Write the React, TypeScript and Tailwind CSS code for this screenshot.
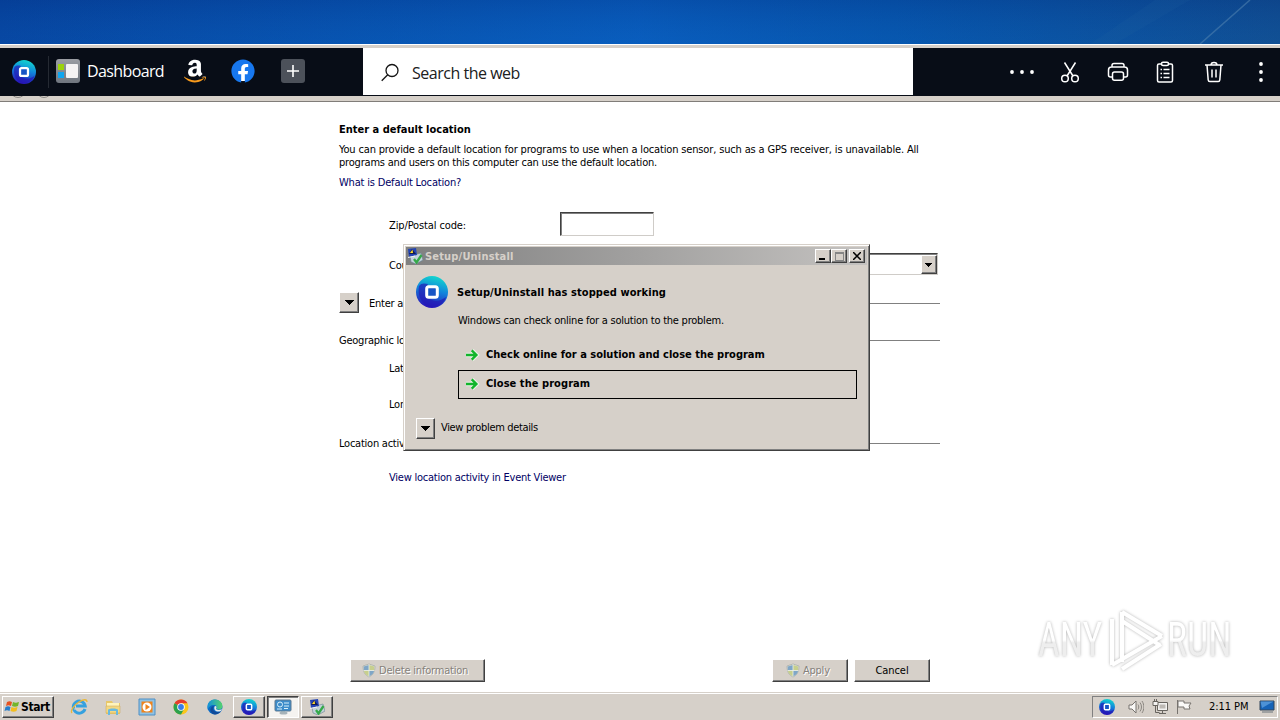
import type { ReactNode } from "react";
import { FaAmazon, FaFacebook } from "react-icons/fa";

const raised =
  "bg-[#d6d0c9] border border-t-white border-l-white border-r-[#404040] border-b-[#404040] shadow-[inset_-1px_-1px_0_#808080]";

function Logo({ className, id }: { className: string; id: string }) {
  return (
    <svg viewBox="0 0 32 32" className={className}>
      <defs>
        <linearGradient id={id} x1="0.65" y1="0" x2="0.4" y2="1">
          <stop offset="0" stopColor="#12d8cd" />
          <stop offset="0.45" stopColor="#1184dc" />
          <stop offset="1" stopColor="#2a10b8" />
        </linearGradient>
      </defs>
      <circle cx="16" cy="16" r="16" fill={`url(#${id})`} />
      <path d="M3 10c-2 10 3 20 13 21 8 0 13-5 14-10-4 3-9 5-14 3C9 22 9 14 12 8 8 7 5 7 3 10z" fill="#2414b4" opacity=".65" />
      <rect x="10.7" y="10.7" width="10.6" height="10.6" rx="2" fill="#1755c5" stroke="#fff" strokeWidth="3" />
    </svg>
  );
}

function Arrow() {
  return (
    <svg viewBox="0 0 14 14" className="mt-px h-[14px] w-[14px] shrink-0">
      <path d="M0 7h10M6 2.500 10.500 7 6 11.500" fill="none" stroke="#e9f2e6" strokeWidth="4.500" />
      <path d="M0 7h10M5.700 2.300 10.400 7l-4.700 4.700" fill="none" stroke="#12b52c" strokeWidth="2.400" />
    </svg>
  );
}

function Drop({ className, small }: { className: string; small?: boolean }) {
  return (
    <span className={`flex shrink-0 items-center justify-center ${raised} ${className}`}>
      {small ? (
        <svg viewBox="0 0 7 4" className="mr-px h-1 w-[7px]" shapeRendering="crispEdges">
          <path d="M0 0h7v1H0zM1 1h5v1H1zM2 2h3v1H2zM3 3h1v1H3z" fill="#000" />
        </svg>
      ) : (
        <svg viewBox="0 0 9 5" className="h-[5px] w-[9px]" shapeRendering="crispEdges">
          <path d="M0 0h9v1H0zM1 1h7v1H1zM2 2h5v1H2zM3 3h3v1H3zM4 4h1v1H4z" fill="#000" />
        </svg>
      )}
    </span>
  );
}

function Shield({ className }: { className: string }) {
  return (
    <svg viewBox="0 0 14 14" className={className}>
      <path d="M7 .5 13 2.500c0 6-2 9-6 11-4-2-6-5-6-11z" fill="#dfe3dc" stroke="#a3a9a5" strokeWidth=".7" />
      <path d="M7 1.500V7H1.800L1.700 3zM7 7h5.200c-.5 2.500-2 4.500-5.200 6z" fill="#7fa6c6" />
      <path d="M7 1.500 12.300 3l-.1 4H7zM7 7v6c-3.200-1.500-4.700-3.500-5.200-6z" fill="#c7cf8d" />
      <path d="M1.500 7h11M7 1v12" stroke="#eef1ea" strokeWidth=".8" />
    </svg>
  );
}

function Installer({ className }: { className: string }) {
  return (
    <svg viewBox="0 0 16 16" className={className}>
      <path d="M3 8 14 5l2 7-7 4-5-2z" fill="#c3d2da" stroke="#66828e" strokeWidth=".6" />
      <path d="m1 1 8-1 1 7-8 2z" fill="#2344b4" />
      <path d="M2 6 5 1l4 5z" fill="#141c50" />
      <path d="m3 5 2.500-3.500L6 5z" fill="#ffdc30" />
      <path d="M1 9.500 8 8" stroke="#f0f3f6" />
      <path d="m7 11 2.500 3.500L14.500 7" stroke="#35a94a" strokeWidth="2.300" fill="none" />
    </svg>
  );
}

function Amazon() {
  return (
    <span className="relative h-[25px] w-[22px]">
      <FaAmazon className="absolute -left-px -top-px h-[26px] w-6 text-white [clip-path:inset(0_0_28%_0)]" />
      <FaAmazon className="absolute -left-px -top-px h-[26px] w-6 text-[#f79a1c] [clip-path:inset(72%_0_0_0)]" />
    </span>
  );
}

function Toolbar() {
  return (
    <div className="flex h-12 shrink-0 bg-[#080d17] font-['Open_Sans',sans-serif] [font-stretch:normal]">
      <div className="flex w-[363px] items-center pl-3">
        <Logo id="bar" className="h-6 w-6" />
        <span className="ml-3 h-8 w-px bg-[#252a33]" />
        <svg viewBox="0 0 24 24" className="mb-0.5 ml-[7px] h-6 w-6">
          <defs>
            <linearGradient id="dash" x1="0" y1="0" x2="0" y2="1">
              <stop offset="0" stopColor="#9a9da3" />
              <stop offset="1" stopColor="#70767f" />
            </linearGradient>
          </defs>
          <rect width="24" height="24" rx="3" fill="url(#dash)" />
          <rect x="2" y="5" width="6" height="6" fill="#9bd20a" />
          <rect x="2" y="13" width="6" height="6" fill="#0ea5ef" />
          <rect x="10" y="5" width="12" height="14" rx="1" fill="#f5f3f3" />
        </svg>
        <span className="mb-0.5 ml-[7px] w-[77px] whitespace-nowrap text-[16px] tracking-[-0.62px] text-white">Dashboard</span>
        <span className="ml-5 mb-px flex"><Amazon /></span>
        <span className="mb-0.5 ml-[25px] flex h-6 w-6 rounded-full bg-[radial-gradient(circle,white_60%,transparent_62%)]">
          <FaFacebook className="h-6 w-6 text-[#1777ee]" />
        </span>
        <span className="mb-0.5 ml-[26px] flex h-6 w-6 items-center justify-center rounded-[3px] bg-[#4c515a]">
          <svg viewBox="0 0 12 12" className="h-3 w-3"><path d="M6 0v12M0 6h12" stroke="#fff" strokeWidth="1.600" /></svg>
        </span>
      </div>
      <div className="flex h-[47px] w-[550px] items-center bg-white pl-[18px]">
        <svg viewBox="0 0 20 20" className="mt-px h-5 w-5" fill="none" stroke="#151515" strokeWidth="1.300">
          <circle cx="11" cy="8.500" r="6" />
          <path d="m6.700 12.700-6 6" />
        </svg>
        <span className="ml-[11px] mt-[3px] text-[16px] tracking-[-0.48px] text-[#202020]">Search the web</span>
      </div>
      <div className="flex flex-1 items-center pb-px pl-[96px] text-white">
        <svg viewBox="0 0 26 6" className="h-1.5 w-[26px]" fill="currentColor">
          <circle cx="3" cy="3" r="1.900" /><circle cx="13" cy="3" r="1.900" /><circle cx="23" cy="3" r="1.900" />
        </svg>
        <svg viewBox="0 0 20 22" className="ml-[25px] h-[22px] w-5" fill="none" stroke="currentColor" strokeWidth="1.500">
          <path d="M4.500 1.500 13 15M15.500 1.500 7 15" />
          <circle cx="5" cy="17.500" r="3.300" /><circle cx="15" cy="17.500" r="3.300" />
        </svg>
        <svg viewBox="0 0 22 20" className="ml-[27px] h-5 w-[22px]" fill="none" stroke="currentColor" strokeWidth="1.500">
          <path d="M5 5V3.500C5 2.200 5.700 1.500 7 1.500h8c1.300 0 2 .7 2 2V5M5 15H3.500c-1.300 0-2-.7-2-2V8c0-2 1-3 3-3h13c2 0 3 1 3 3v5c0 1.300-.7 2-2 2H17" />
          <rect x="5.500" y="10" width="11" height="8.200" rx="2" />
        </svg>
        <svg viewBox="0 0 18 22" className="ml-[27px] h-[22px] w-[18px]" fill="none" stroke="currentColor" strokeWidth="1.500">
          <path d="M5.500 3H3c-1 0-1.500.5-1.500 1.500v15c0 1 .5 1.500 1.500 1.500h12c1 0 1.500-.5 1.500-1.500v-15c0-1-.5-1.500-1.500-1.500h-2.500" />
          <rect x="5.500" y="1.200" width="7" height="3.300" rx="1.500" />
          <path d="M4.500 8.500h1.500M4.500 12.500h1.500M4.500 16.500h1.500M7.500 8.500h6M7.500 12.500h6M7.500 16.500h6" />
        </svg>
        <svg viewBox="0 0 20 22" className="ml-[30px] h-[22px] w-5" fill="none" stroke="currentColor" strokeWidth="1.500">
          <path d="M1 4h18M7 4c0-3.500 6-3.500 6 0M3 4l1.200 15c.1 1 .7 1.500 1.600 1.500h8.400c.9 0 1.500-.5 1.600-1.500L17 4M8 8.500v8M12 8.500v8" />
        </svg>
        <svg viewBox="0 0 6 22" className="ml-[34px] h-[22px] w-1.5" fill="currentColor">
          <circle cx="3" cy="3" r="1.900" /><circle cx="3" cy="11" r="1.900" /><circle cx="3" cy="19" r="1.900" />
        </svg>
      </div>
    </div>
  );
}

function Section({ children, className }: { children: ReactNode; className: string }) {
  return (
    <div className={`flex items-center gap-2 whitespace-nowrap ${className}`}>
      {children}
      <span className="h-px flex-1 bg-[#808080]" />
    </div>
  );
}

function LocationPage() {
  return (
    <main className="flex min-h-0 flex-1 flex-col whitespace-nowrap pb-[10px] pl-[339px] pt-[21px] tracking-[-0.24px]">
      <div className="flex w-[601px] flex-col leading-[13px]">
        <h1 className="h-[13px] font-bold tracking-[0px]">Enter a default location</h1>
        <p className="mt-[7px] tracking-[-0.155px]">
          You can provide a default location for programs to use when a location sensor, such as a GPS receiver, is unavailable. All
          <br />
          <span className="tracking-[-0.2px]">programs and users on this computer can use the default location.</span>
        </p>
        <a className="mt-[7px] tracking-[-0.18px] text-[#000064]">What is Default Location?</a>
        <div className="mt-[23px] flex h-6 items-center pl-[50px]">
          <span className="w-[171px] pt-0.5 tracking-[-0.12px]">Zip/Postal code:</span>
          <span className="h-6 w-[94px] border border-b-[#cfccc8] border-l-[#404040] border-r-[#cfccc8] border-t-[#404040] shadow-[inset_1px_1px_0_#808080]" />
        </div>
        <div className="mt-[17px] flex h-[22px] items-center pl-[50px]">
          <span className="w-[171px] pt-0.5">Country:</span>
          <span className="flex h-[22px] w-[378px] justify-end border border-b-[#cfccc8] border-l-[#404040] border-r-[#cfccc8] border-t-[#404040] pt-px shadow-[inset_1px_1px_0_#808080]">
            <Drop small className="h-[19px] w-4" />
          </span>
        </div>
        <div className="mt-[17px] flex h-[21px]">
          <Drop className="h-[21px] w-5" />
          <Section className="ml-[10px] mt-px h-[21px] flex-1">Enter a location</Section>
        </div>
        <Section className="mt-[21px] h-[13px]">Geographic location</Section>
        <span className="ml-[50px] mt-[15px]">Latitude:</span>
        <span className="ml-[50px] mt-[23px]">Longitude:</span>
        <Section className="mt-[26px] h-[13px]">Location activity</Section>
        <a className="ml-[50px] mt-[21px] text-[#000064]">View location activity in Event Viewer</a>
      </div>
      <div className="mt-auto flex h-[23px] pl-[11px] text-[#85817b]">
        <button className={`flex w-[135px] items-center gap-[3px] pl-[11px] ${raised}`}>
          <Shield className="h-[15px] w-[14px]" />
          <span className="pt-0.5 tracking-[-0.2px] [text-shadow:1px_1px_0_white]">Delete information</span>
        </button>
        <button className={`ml-[287px] flex w-[76px] items-center gap-[3px] pl-[13px] ${raised}`}>
          <Shield className="h-[15px] w-[14px]" />
          <span className="pt-0.5 [text-shadow:1px_1px_0_white]">Apply</span>
        </button>
        <button className={`ml-1.5 w-[76px] pt-0.5 tracking-[-0.05px] text-black ${raised}`}>Cancel</button>
      </div>
    </main>
  );
}

function CrashDialog() {
  return (
    <div className="absolute left-[403px] top-[244px] flex h-[207px] w-[467px] flex-col whitespace-nowrap border border-b-[#404040] border-l-[#d6d0c9] border-r-[#404040] border-t-[#d6d0c9] bg-[#d6d0c9] p-0.5 leading-[13px] shadow-[inset_1px_1px_0_white,inset_-1px_-1px_0_#808080]">
      <div className="flex h-[18px] shrink-0 items-center bg-linear-to-r from-[#808080] to-[#c4c2c0] pl-px pr-0.5">
        <Installer className="h-4 w-4" />
        <span className="ml-[2px] flex-1 font-bold tracking-[0.18px] text-[#d6d0c9]">Setup/Uninstall</span>
        <span className={`flex h-[14px] w-4 items-end pb-0.5 pl-[3px] ${raised}`}><span className="h-0.5 w-1.5 bg-black" /></span>
        <span className={`flex h-[14px] w-4 items-center justify-center ${raised}`}><span className="h-[9px] w-[9px] border border-t-2 border-[#858585]" /></span>
        <span className={`ml-0.5 flex h-[14px] w-4 items-center justify-center ${raised}`}>
          <svg viewBox="0 0 8 8" className="h-2 w-2"><path d="m0 0 8 8M8 0 0 8" stroke="#000" strokeWidth="1.500" /></svg>
        </span>
      </div>
      <div className="flex flex-1 flex-col pl-[10px] pr-[10px] pt-[11px]">
        <div className="flex h-8 items-center">
          <Logo id="dialog" className="h-8 w-8" />
          <h2 className="ml-[9px] font-bold tracking-[0.08px]">Setup/Uninstall has stopped working</h2>
        </div>
        <p className="ml-[42px] mt-[6px] tracking-[-0.23px]">Windows can check online for a solution to the problem.</p>
        <div className="ml-[42px] mt-[14px] flex h-[29px] items-center gap-[6px] pb-[3px] pl-2 font-bold">
          <Arrow /><span>Check online for a solution and close the program</span>
        </div>
        <div className="ml-[42px] flex h-[29px] items-center gap-[6px] border border-black pb-[3px] pl-[7px] font-bold tracking-[0.06px]">
          <Arrow /><span>Close the program</span>
        </div>
        <div className="mt-[19px] flex h-5 items-center">
          <Drop className="h-[21px] w-[19px]" />
          <span className="mb-0.5 ml-1.5 tracking-[-0.34px]">View problem details</span>
        </div>
      </div>
    </div>
  );
}

function Watermark() {
  return (
    <div className="absolute left-[1038px] top-[608px] flex h-16 w-[200px] items-center font-['Liberation_Sans_Narrow','Roboto',sans-serif] [filter:drop-shadow(0_0_1.5px_#b4b4b4)]">
      <div className="flex w-[70px] shrink-0">
        <span className="shrink-0 origin-left scale-x-[0.77] bg-linear-to-b from-white from-50% to-[#eeeeee] to-55% bg-clip-text text-[49px] leading-[54px] text-transparent">ANY</span>
      </div>
      <svg viewBox="0 0 58 64" className="h-16 w-[58px] shrink-0" fill="none" stroke="#fff" strokeWidth="4">
        <path d="M14 4v50M14 4l40 24M14 13l36 23M4 11v46M4 57l50-29M14 61l39-25" />
      </svg>
      <div className="flex w-[70px] shrink-0 pl-px">
        <span className="shrink-0 origin-left scale-x-[0.77] bg-linear-to-b from-white from-50% to-[#eeeeee] to-55% bg-clip-text text-[49px] leading-[54px] text-transparent">RUN</span>
      </div>
    </div>
  );
}

function Taskbar() {
  return (
    <footer className="flex h-7 shrink-0 items-center border-t border-[#d6d0c9] bg-[#d6d0c9] pl-0.5 pr-0.5 shadow-[inset_0_1px_0_white]">
      <button className={`flex h-[22px] w-[52px] items-center gap-px pl-px ${raised}`}>
        <svg viewBox="0 0 16 16" className="h-4 w-4">
          <path d="M3 3c2-1 3-1 5 0L7 7C5 6 4 6 2 7z" fill="#e65220" />
          <path d="M9 3c2 1 3 1 6 0l-1 4c-2 1-4 1-6 0z" fill="#74b52b" />
          <path d="M1.500 8c2-1 3-1 5 0l-1 4c-2-1-3-1-5 0z" fill="#267dcb" />
          <path d="M7.500 8c2 1 3 1 6 0l-1 4c-2 1-4 1-6 0z" fill="#f3bd1e" />
        </svg>
        <span className="text-[12px] font-bold tracking-[-0.4px]">Start</span>
      </button>
      <div className="ml-4 flex h-[22px] items-center gap-4">
        <svg viewBox="0 0 18 18" className="h-[18px] w-[18px]" fill="none">
          <path d="M15 11a6 6 0 1 1 .2-3H6" stroke="#35a1df" strokeWidth="3" />
          <path d="M4 11h9" stroke="#d6d0c9" />
          <path d="M2 15c-2-2 2-8 7-11s8-3 8 0" stroke="#e8b739" strokeWidth="1.300" />
        </svg>
        <svg viewBox="0 0 18 18" className="h-[18px] w-[18px]">
          <path d="M2 3h6l1 2h7v11H2z" fill="#e8c768" /><path d="M3 5h12v6H3z" fill="#fff4bb" />
          <path d="M2 8h14v7H2z" fill="#f3d881" stroke="#c9a558" strokeWidth=".5" /><path d="M4 17v-5c0-2 10-2 10 0v5h-2v-4H6v4z" fill="#69b9df" />
        </svg>
        <svg viewBox="0 0 18 18" className="h-[18px] w-[18px]">
          <path d="M1 1h16v16H1z" fill="#8fc2e4" stroke="#4f8fc4" /><path d="M3.500 3.500h11v11h-11z" fill="#ef831c" /><circle cx="9" cy="9" r="4.500" fill="#fff" /><path d="m7.500 6 4.500 3-4.500 3z" fill="#ef831c" />
        </svg>
        <svg viewBox="0 0 18 18" className="h-[18px] w-[18px]">
          <circle cx="9" cy="9" r="7.500" fill="#fbc61b" />
          <path d="M9 9 2.500 5.300A7.500 7.500 0 0 1 15.500 5.300H9z" fill="#e53c2f" />
          <path d="M9 9 2.500 5.300A7.500 7.500 0 0 0 9 16.500L12 11z" fill="#2ca14d" />
          <circle cx="9" cy="9" r="3.800" fill="#fff" /><circle cx="9" cy="9" r="2.900" fill="#397de8" />
        </svg>
        <svg viewBox="0 0 18 18" className="h-[18px] w-[18px]">
          <defs><linearGradient id="edge"><stop stopColor="#1290dc" /><stop offset="1" stopColor="#55d36d" /></linearGradient></defs>
          <circle cx="9" cy="9" r="7.500" fill="#0b6ac6" />
          <path d="M1.500 8C2 3 6 1.500 9 1.500c5 0 8 4 7.300 7.500-.5 3-4 3-6 2 1-2 0-4-2.500-4S3 8 1.500 12z" fill="url(#edge)" />
          <path d="M8 8c-3 4 2 8 7 5-2 3-6 4-8 3-5-3-2-8 1-8z" fill="#114a99" />
          <path d="M8.500 8.500c1-1.500 3 0 1.500 2.500 2 1.500 4 1 6 0-.4 1-1 2-1.600 2.300-4 1-7-1-5.900-4.800z" fill="#e4e8e7" />
        </svg>
      </div>
      <div className="ml-[9px] flex gap-0.5">
        <span className={`flex h-[22px] w-8 items-center justify-center ${raised}`}><Logo id="task" className="h-4 w-4" /></span>
        <span className="flex h-[22px] w-8 items-center justify-center border border-b-white border-l-[#404040] border-r-white border-t-[#404040] bg-[#f5f3f0] shadow-[inset_1px_1px_0_#808080]">
          <svg viewBox="0 0 18 16" className="h-4 w-[18px]">
            <rect x="1" y="1" width="16" height="11" rx="1" fill="#3d8cca" stroke="#5c7990" />
            <circle cx="6" cy="5.500" r="2.500" fill="none" stroke="#d9f1fb" />
            <path d="M3 10h5M10 4h5M10 7h5M10 9.500h4" stroke="#d9f1fb" />
            <path d="M7 12h4v2H7z" fill="#8fa6b2" /><ellipse cx="9.500" cy="14" rx="4" ry="1.500" fill="#a6b2b8" />
          </svg>
        </span>
        <span className={`flex h-[22px] w-8 items-center justify-center ${raised}`}><Installer className="h-4 w-4" /></span>
      </div>
      <div className="ml-auto flex h-[22px] w-[186px] items-center border border-b-white border-l-[#808080] border-r-white border-t-[#808080] pl-1.5">
        <Logo id="tray" className="h-4 w-4" />
        <svg viewBox="0 0 16 16" className="ml-[13px] h-4 w-4" fill="none" stroke="#77736e">
          <path d="M1 6h3l4-4v12l-4-4H1z" fill="#f8f7f5" />
          <path d="M10 5.500c1 1.500 1 3.500 0 5M12 3.500c2 3 2 6 0 9M14 2c2.500 4 2.500 8 0 12" strokeWidth=".8" />
        </svg>
        <svg viewBox="0 0 16 16" className="ml-2 h-4 w-4" fill="#f3f2f0" stroke="#68645f">
          <path d="M5.500 3.500h10v8h-10zM7 14.500h7M10.500 12v2" />
          <path d="M7.500 5.500h6v4h-6z" fill="#bdb9b4" stroke="none" />
          <path d="M1 2.500h5v4H1zM2.500 0v2M4.500 0v2" /><path d="M3.500 7v6.500h4" fill="none" />
        </svg>
        <svg viewBox="0 0 16 16" className="ml-2 h-4 w-4" fill="#faf9f7" stroke="#77736e">
          <path d="M1.500 15V1M2 2h6v2h7l-2 3 1 3H8V8H2z" />
        </svg>
        <span className="ml-[17px] w-[42px] whitespace-nowrap pt-px tracking-[-0.05px]">2:11 PM</span>
        <svg viewBox="0 0 16 15" className="ml-[8px] h-[15px] w-4">
          <path d="M1 2h14v9H1z" fill="#1663b7" stroke="#33475b" /><path d="M1.500 2.500h13L3 9z" fill="#4d92d6" /><path d="M3 13h11" stroke="#68727b" />
        </svg>
      </div>
    </footer>
  );
}

export default function App() {
  return (
    <div className="relative flex h-[720px] w-[1280px] flex-col overflow-hidden bg-white font-['DejaVu_Sans_Condensed','DejaVu_Sans',sans-serif] text-[11px] text-black [font-stretch:condensed]">
      <div className="h-11 shrink-0 overflow-hidden bg-linear-to-r from-[#06409a] via-[#034f9f] via-70% to-[#124a87]">
        <svg viewBox="0 0 1280 44" className="h-11 w-[1280px]">
          <defs>
            <linearGradient id="sky">
              <stop stopColor="#0a5fc6" stopOpacity="0" />
              <stop offset=".5" stopColor="#0a62c8" stopOpacity=".7" />
              <stop offset="1" stopColor="#0a4fa0" stopOpacity="0" />
            </linearGradient>
            <linearGradient id="shade" x1="0" y1="0" x2="0" y2="1">
              <stop stopColor="#053c92" stopOpacity=".35" />
              <stop offset="1" stopColor="#0d68c8" stopOpacity=".2" />
            </linearGradient>
          </defs>
          <path d="M0 0h1280v44H0z" fill="url(#sky)" />
          <path d="M0 0h1280v44H0z" fill="url(#shade)" />
          <path d="m1200 44 50-44" stroke="#4e80af" strokeWidth="1.500" opacity=".6" />
          <path d="m1090 44 65-44h35l-75 44z" fill="#2969a8" opacity=".12" />
        </svg>
      </div>
      <div className="h-1 shrink-0 border-t border-white bg-[#d6d0c9]" />
      <Toolbar />
      <div className="flex h-1.5 shrink-0 gap-2.5 overflow-hidden border-b border-[#807d79] bg-[#d6d0c9] pl-2.5">
        <span className="-mt-3.5 h-4 w-4 rounded-full border border-[#8c8985]" />
        <span className="-mt-3.5 h-4 w-4 rounded-full border border-[#8c8985]" />
      </div>
      <LocationPage />
      <Taskbar />
      <CrashDialog />
      <Watermark />
    </div>
  );
}
